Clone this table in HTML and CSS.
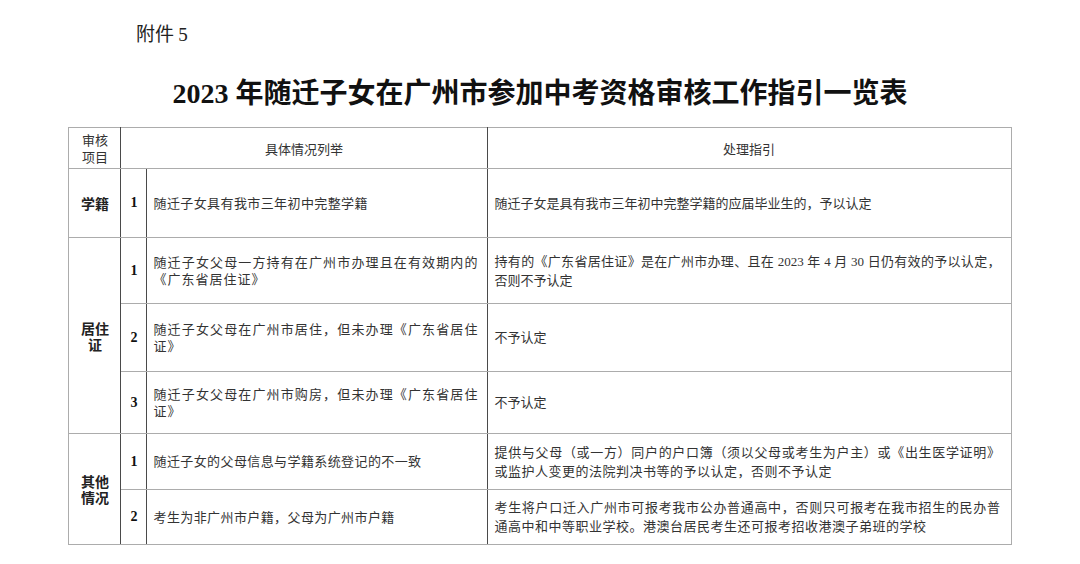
FILE: index.html
```html
<!DOCTYPE html>
<html lang="zh-CN">
<head>
<meta charset="utf-8">
<title>2023年随迁子女在广州市参加中考资格审核工作指引一览表</title>
<link rel="stylesheet" href="styles.css">
</head>
<body>
<div class="page">
  <div class="attach">附件 <span class="num">5</span></div>
  <h1 class="title"><span class="num">2023</span> 年随迁子女在广州市参加中考资格审核工作指引一览表</h1>
  <table class="grid">
    <colgroup>
      <col class="w-item">
      <col class="w-no">
      <col class="w-case">
      <col class="w-guide">
    </colgroup>
    <thead>
      <tr class="r-head">
        <th class="c-item">审核<br>项目</th>
        <th class="c-case" colspan="2">具体情况列举</th>
        <th class="c-guide">处理指引</th>
      </tr>
    </thead>
    <tbody>
      <tr class="r-xj">
        <td class="c-item label">学籍</td>
        <td class="c-no">1</td>
        <td class="c-case">随迁子女具有我市三年初中完整学籍</td>
        <td class="c-guide">随迁子女是具有我市三年初中完整学籍的应届毕业生的，予以认定</td>
      </tr>
      <tr class="r-jz1">
        <td class="c-item label" rowspan="3">居住证</td>
        <td class="c-no">1</td>
        <td class="c-case spread">随迁子女父母一方持有在广州市办理且在有效期内的《广东省居住证》</td>
        <td class="c-guide">持有的《广东省居住证》是在广州市办理、且在 2023 年 4 月 30 日仍有效的予以认定，否则不予认定</td>
      </tr>
      <tr class="r-jz2">
        <td class="c-no">2</td>
        <td class="c-case spread">随迁子女父母在广州市居住，但未办理《广东省居住证》</td>
        <td class="c-guide">不予认定</td>
      </tr>
      <tr class="r-jz3">
        <td class="c-no">3</td>
        <td class="c-case spread">随迁子女父母在广州市购房，但未办理《广东省居住证》</td>
        <td class="c-guide">不予认定</td>
      </tr>
      <tr class="r-qt1">
        <td class="c-item label" rowspan="2">其他情况</td>
        <td class="c-no">1</td>
        <td class="c-case">随迁子女的父母信息与学籍系统登记的不一致</td>
        <td class="c-guide spread">提供与父母（或一方）同户的户口簿（须以父母或考生为户主）或《出生医学证明》或监护人变更的法院判决书等的予以认定，否则不予认定</td>
      </tr>
      <tr class="r-qt2">
        <td class="c-no">2</td>
        <td class="c-case">考生为非广州市户籍，父母为广州市户籍</td>
        <td class="c-guide spread">考生将户口迁入广州市可报考我市公办普通高中，否则只可报考在我市招生的民办普通高中和中等职业学校。港澳台居民考生还可报考招收港澳子弟班的学校</td>
      </tr>
    </tbody>
  </table>
</div>
</body>
</html>
```

FILE: styles.css
```css
html, body {
  margin: 0;
  padding: 0;
  background: #ffffff;
}

body {
  width: 1080px;
  height: 564px;
  overflow: hidden;
  font-family: "Liberation Serif", "Noto Sans CJK SC", serif;
  color: #333;
}

.page {
  display: flex;
  flex-direction: column;
  align-items: center;
}

.attach {
  align-self: flex-start;
  margin: 21px 0 0 136px;
  font-family: "Noto Sans CJK SC", sans-serif;
  font-size: 19px;
  line-height: 24px;
  color: #222;
}

.attach .num {
  font-family: "Liberation Serif", serif;
}

.title {
  margin: 27px 0 0 0;
  font-family: "Liberation Serif", "Noto Sans CJK SC", serif;
  font-size: 28px;
  line-height: 40px;
  font-weight: 700;
  color: #111;
  letter-spacing: 0;
}

.title .num {
  font-family: "Liberation Serif", serif;
}

.grid {
  margin-top: 13px;
  width: 942px;
  border-collapse: collapse;
  table-layout: fixed;
}

.w-item { width: 52px; }
.w-no { width: 26px; }
.w-case { width: 340px; }
.w-guide { width: 524px; }

.grid th,
.grid td {
  border: 1px solid #acacac;
  padding: 0;
  vertical-align: middle;
}

.grid th {
  font-family: "Noto Sans CJK SC", sans-serif;
  font-weight: 400;
  font-size: 13px;
  line-height: 17px;
  color: #333;
  text-align: center;
}

.grid .c-item,
.grid .c-no,
.grid th.c-case {
  border-right-color: #4a4a4a;
}

.grid td.c-case {
  border-right-color: #4a4a4a;
}

.label {
  font-family: "Noto Sans CJK SC", sans-serif;
  font-weight: 700;
  font-size: 14px;
  line-height: 16px;
  color: #222;
  text-align: center;
  padding: 0 8px !important;
}

.c-no {
  font-family: "Liberation Serif", serif;
  font-weight: 700;
  font-size: 14px;
  color: #111;
  text-align: center;
}

td.c-case {
  padding: 0 8px 0 6px;
  font-size: 13px;
  line-height: 17px;
  letter-spacing: 0.4px;
  text-align: justify;
}

td.c-case.spread {
  letter-spacing: 1px;
}

td.c-guide {
  padding: 0 10px 0 7px;
  font-size: 13px;
  line-height: 19px;
  letter-spacing: 0;
  text-align: justify;
}

td.c-guide.spread {
  letter-spacing: 0.5px;
}

.r-head { height: 41px; }
.r-xj { height: 69px; }
.r-jz1 { height: 66px; }
.r-jz2 { height: 68px; }
.r-jz3 { height: 62px; }
.r-qt1 { height: 56px; }
.r-qt2 { height: 55px; }
```
